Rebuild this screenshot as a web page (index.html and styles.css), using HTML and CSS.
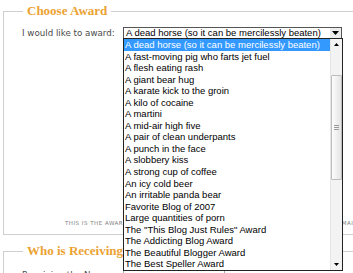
FILE: index.html
```html
<!DOCTYPE html>
<html>
<head>
<meta charset="utf-8">
<link rel="stylesheet" href="styles.css">
</head>
<body>
<div class="page">
  <fieldset class="box box-award">
    <legend class="box-title">Choose Award</legend>
    <div class="award-row">
      <label class="field-label">I would like to award:</label>
      <div class="combo">
        <div class="combo-field">
          <span class="combo-value">A dead horse (so it can be mercilessly beaten)</span>
          <span class="combo-btn"><svg width="7" height="4" viewBox="0 0 7 4"><path d="M0 0H7L3.5 4Z" fill="#000"/></svg></span>
        </div>
        <div class="combo-list">
          <ul class="options">
            <li class="opt is-selected">A dead horse (so it can be mercilessly beaten)</li>
            <li class="opt">A fast-moving pig who farts jet fuel</li>
            <li class="opt">A flesh eating rash</li>
            <li class="opt">A giant bear hug</li>
            <li class="opt">A karate kick to the groin</li>
            <li class="opt">A kilo of cocaine</li>
            <li class="opt">A martini</li>
            <li class="opt">A mid-air high five</li>
            <li class="opt">A pair of clean underpants</li>
            <li class="opt">A punch in the face</li>
            <li class="opt">A slobbery kiss</li>
            <li class="opt">A strong cup of coffee</li>
            <li class="opt">An icy cold beer</li>
            <li class="opt">An irritable panda bear</li>
            <li class="opt">Favorite Blog of 2007</li>
            <li class="opt">Large quantities of porn</li>
            <li class="opt">The "This Blog Just Rules" Award</li>
            <li class="opt">The Addicting Blog Award</li>
            <li class="opt">The Beautiful Blogger Award</li>
            <li class="opt">The Best Speller Award</li>
          </ul>
          <div class="scrollbar">
            <div class="sb-arrow"><svg width="5" height="3" viewBox="0 0 5 3"><path d="M0 3H5L2.5 0Z" fill="#000"/></svg></div>
            <div class="sb-track"><div class="sb-thumb"><span class="grip"></span></div></div>
            <div class="sb-arrow"><svg width="5" height="3" viewBox="0 0 5 3"><path d="M0 0H5L2.5 3Z" fill="#000"/></svg></div>
          </div>
        </div>
      </div>
    </div>
    <p class="award-note">THIS IS THE AWARD THAT WILL BE DISPLAYED ON THE CERTIFICATE THAT IS SENT BY EMAIL</p>
  </fieldset>
  <fieldset class="box box-recipient">
    <legend class="box-title">Who is Receiving This Award?</legend>
    <div class="award-row recipient-row">
      <label class="field-label">Receiving the Name:</label>
      <input class="text-input" type="text">
    </div>
  </fieldset>
</div>
</body>
</html>
```

FILE: styles.css
```css
html, body {
  margin: 0;
  padding: 0;
  overflow: hidden;
  background: #fff;
}
.page {
  width: 440px;
  padding: 3px 0 0 3px;
}
.box {
  margin: 0;
  padding: 0;
  border: 1px solid #cfcfcf;
  min-width: 0;
}
.box-title {
  margin-left: 19px;
  padding: 0 4px;
  font-family: "Liberation Serif", serif;
  font-weight: bold;
  font-size: 13px;
  line-height: 16px;
  color: #eba232;
}
.award-row {
  display: flex;
  align-items: center;
  padding: 8px 0 0 18px;
}
.field-label {
  font-family: "DejaVu Sans", sans-serif;
  font-size: 8.7px;
  color: #4a4a4a;
  width: 101px;
}
.combo {
  position: relative;
  font-family: "Liberation Sans", Arial, sans-serif;
  font-size: 9.5px;
  color: #000;
}
.combo-field {
  display: flex;
  align-items: center;
  width: 217px;
  height: 10px;
  border: 1px solid #555;
  background: #fff;
}
.combo-value {
  flex: 1;
  padding-left: 2px;
  line-height: 10px;
  white-space: nowrap;
}
.combo-btn {
  display: flex;
  align-items: center;
  justify-content: center;
  width: 11px;
  height: 10px;
  background: #ececec;
}
.combo-list {
  position: absolute;
  top: 11px;
  left: 0;
  width: 218px;
  height: 231px;
  border: 1px solid #222;
  background: #fff;
  display: flex;
  z-index: 5;
}
.options {
  flex: 1;
  margin: 0;
  padding: 0;
  list-style: none;
}
.opt {
  height: 11.55px;
  line-height: 11.55px;
  padding-left: 1px;
  white-space: nowrap;
}
.opt.is-selected {
  background: #3399ff;
  color: #fff;
}
.scrollbar {
  width: 11px;
  display: flex;
  flex-direction: column;
  background: #f3f3f3;
  border-left: 1px solid #e6e6e6;
}
.sb-arrow {
  height: 11px;
  display: flex;
  align-items: center;
  justify-content: center;
}
.sb-track {
  flex: 1;
}
.sb-thumb {
  margin-top: 25px;
  height: 103px;
  border: 1px solid #bdbdbd;
  border-radius: 1px;
  background: linear-gradient(to right, #fdfdfd, #e4e4e4);
  display: flex;
  align-items: center;
  justify-content: center;
}
.grip {
  width: 5px;
  height: 5px;
  background: repeating-linear-gradient(to bottom, #9a9a9a 0 1px, transparent 1px 2px);
}
.award-note {
  margin: 180px 0 0;
  padding: 0 0 6px 61px;
  font-family: "DejaVu Sans", sans-serif;
  font-size: 5.5px;
  line-height: 9px;
  letter-spacing: 0.5px;
  color: #7e7e7e;
  white-space: nowrap;
}
.box-recipient {
  margin-top: 8px;
  height: 60px;
}
.recipient-row {
  padding-top: 8px;
}
.text-input {
  width: 100px;
  height: 14px;
  border: 1px solid #aaa;
  padding: 0;
  margin: 0;
}
```
